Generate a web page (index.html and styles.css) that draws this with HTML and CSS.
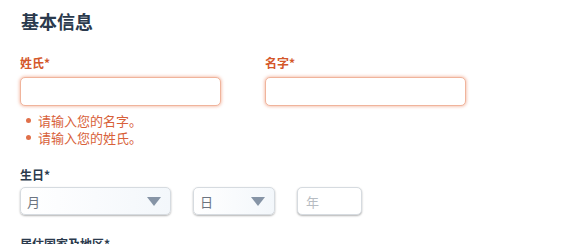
FILE: index.html
```html
<!DOCTYPE html>
<html lang="zh">
<head>
<meta charset="utf-8">
<link rel="stylesheet" href="styles.css">
</head>
<body>
<div class="page">
  <h2 class="title">基本信息</h2>
  <div class="name-row">
    <div class="field">
      <label class="label err">姓氏*</label>
      <input class="text-input invalid" type="text">
    </div>
    <div class="field">
      <label class="label err">名字*</label>
      <input class="text-input invalid" type="text">
    </div>
  </div>
  <ul class="errors">
    <li>请输入您的名字。</li>
    <li>请输入您的姓氏。</li>
  </ul>
  <div class="label dob-label">生日*</div>
  <div class="dob-row">
    <div class="select month"><span>月</span><i class="arrow"></i></div>
    <div class="select day"><span>日</span><i class="arrow"></i></div>
    <div class="year-input"><span>年</span></div>
  </div>
  <div class="label country-label">居住国家及地区*</div>
</div>
</body>
</html>
```
FILE: styles.css
```css
* { box-sizing: border-box; }
body {
  margin: 0;
  background: #fff;
  font-family: "Noto Sans CJK SC", "Noto Sans", sans-serif;
}
.page {
  padding: 8px 0 0 20px;
}
.title {
  margin: 0 0 0 1px;
  font-size: 18px;
  line-height: 26px;
  font-weight: 700;
  color: #2b3a4d;
}
.name-row {
  display: flex;
  gap: 44px;
  margin-top: 21px;
}
.field {
  display: flex;
  flex-direction: column;
  width: 201px;
}
.label {
  display: block;
  font-size: 12px;
  line-height: 16px;
  font-weight: 700;
  color: #2b3a4d;
}
.label.err {
  color: #d4572a;
}
.text-input {
  margin-top: 6px;
  width: 201px;
  height: 29px;
  border: 1px solid #f0b49c;
  border-radius: 5px;
  background: #fff;
  box-shadow: 0 0 3px 1px rgba(232, 120, 80, 0.4);
  outline: none;
}
.errors {
  list-style: none;
  margin: 6px 0 0 0;
  padding: 0 0 0 6px;
  font-size: 13px;
  line-height: 17px;
  color: #d8613a;
}
.errors li {
  display: flex;
  align-items: center;
  gap: 7px;
  height: 17px;
}
.errors li::before {
  content: "";
  width: 5px;
  height: 5px;
  border-radius: 50%;
  background: #e0704a;
}
.dob-label {
  margin-top: 21px;
}
.dob-row {
  display: flex;
  gap: 22px;
  margin-top: 4px;
}
.select, .year-input {
  height: 28px;
  border: 1px solid #d6dbe0;
  border-radius: 5px;
  background: linear-gradient(to right, #fff, #f3f7fb);
  box-shadow: 0 1px 2px 0 rgba(0, 0, 0, 0.3);
  display: flex;
  align-items: center;
  justify-content: space-between;
  padding: 0 9px 0 6px;
  font-size: 13px;
  color: #6b7480;
}
.month { width: 151px; }
.day { width: 82px; }
.year-input {
  width: 65px;
  background: #fff;
  padding-left: 8px;
  color: #b7bcc2;
}
.arrow {
  width: 0;
  height: 0;
  border-left: 7px solid transparent;
  border-right: 7px solid transparent;
  border-top: 9px solid #8694a6;
}
.country-label {
  margin-top: 21px;
}
```
